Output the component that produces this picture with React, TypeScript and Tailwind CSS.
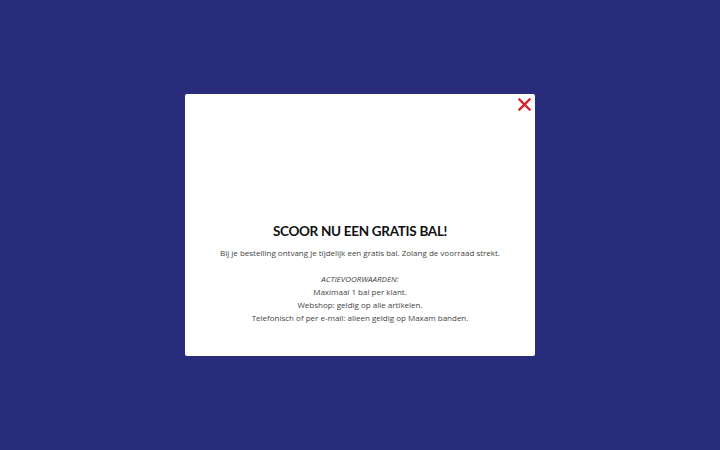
import React from 'react';

const App: React.FC = () => {
  return (
    <div className="w-[720px] h-[450px] bg-[#282c7b] flex items-center justify-center font-['Open_Sans',sans-serif]">
      <div className="relative w-[350px] h-[262px] bg-white rounded-[2px] flex flex-col items-center pt-[129px] text-center">
        <button className="absolute right-[4px] top-[3px] w-[14px] h-[14px] flex items-center justify-center">
          <svg width="13" height="13" viewBox="0 0 13 13">
            <path d="M1.5 1.5 L11.5 11.5 M11.5 1.5 L1.5 11.5" stroke="#d3262c" strokeWidth="2.4" strokeLinecap="square" />
          </svg>
        </button>
        <h2 className="font-['Lato',sans-serif] text-[13.5px] leading-[17px] font-bold text-[#111] tracking-[-0.3px]">SCOOR NU EEN GRATIS BAL!</h2>
        <p className="mt-[6px] text-[8px] leading-[13px] text-[#444]">
          Bij je bestelling ontvang je tijdelijk een gratis bal. Zolang de voorraad strekt.
        </p>
        <div className="mt-[13px] text-[8px] leading-[13px] text-[#444]">
          <p className="italic">ACTIEVOORWAARDEN:</p>
          <p>Maximaal 1 bal per klant.</p>
          <p>Webshop: geldig op alle artikelen.</p>
          <p>Telefonisch of per e-mail: alleen geldig op Maxam banden.</p>
        </div>
      </div>
    </div>
  );
};

export default App;
